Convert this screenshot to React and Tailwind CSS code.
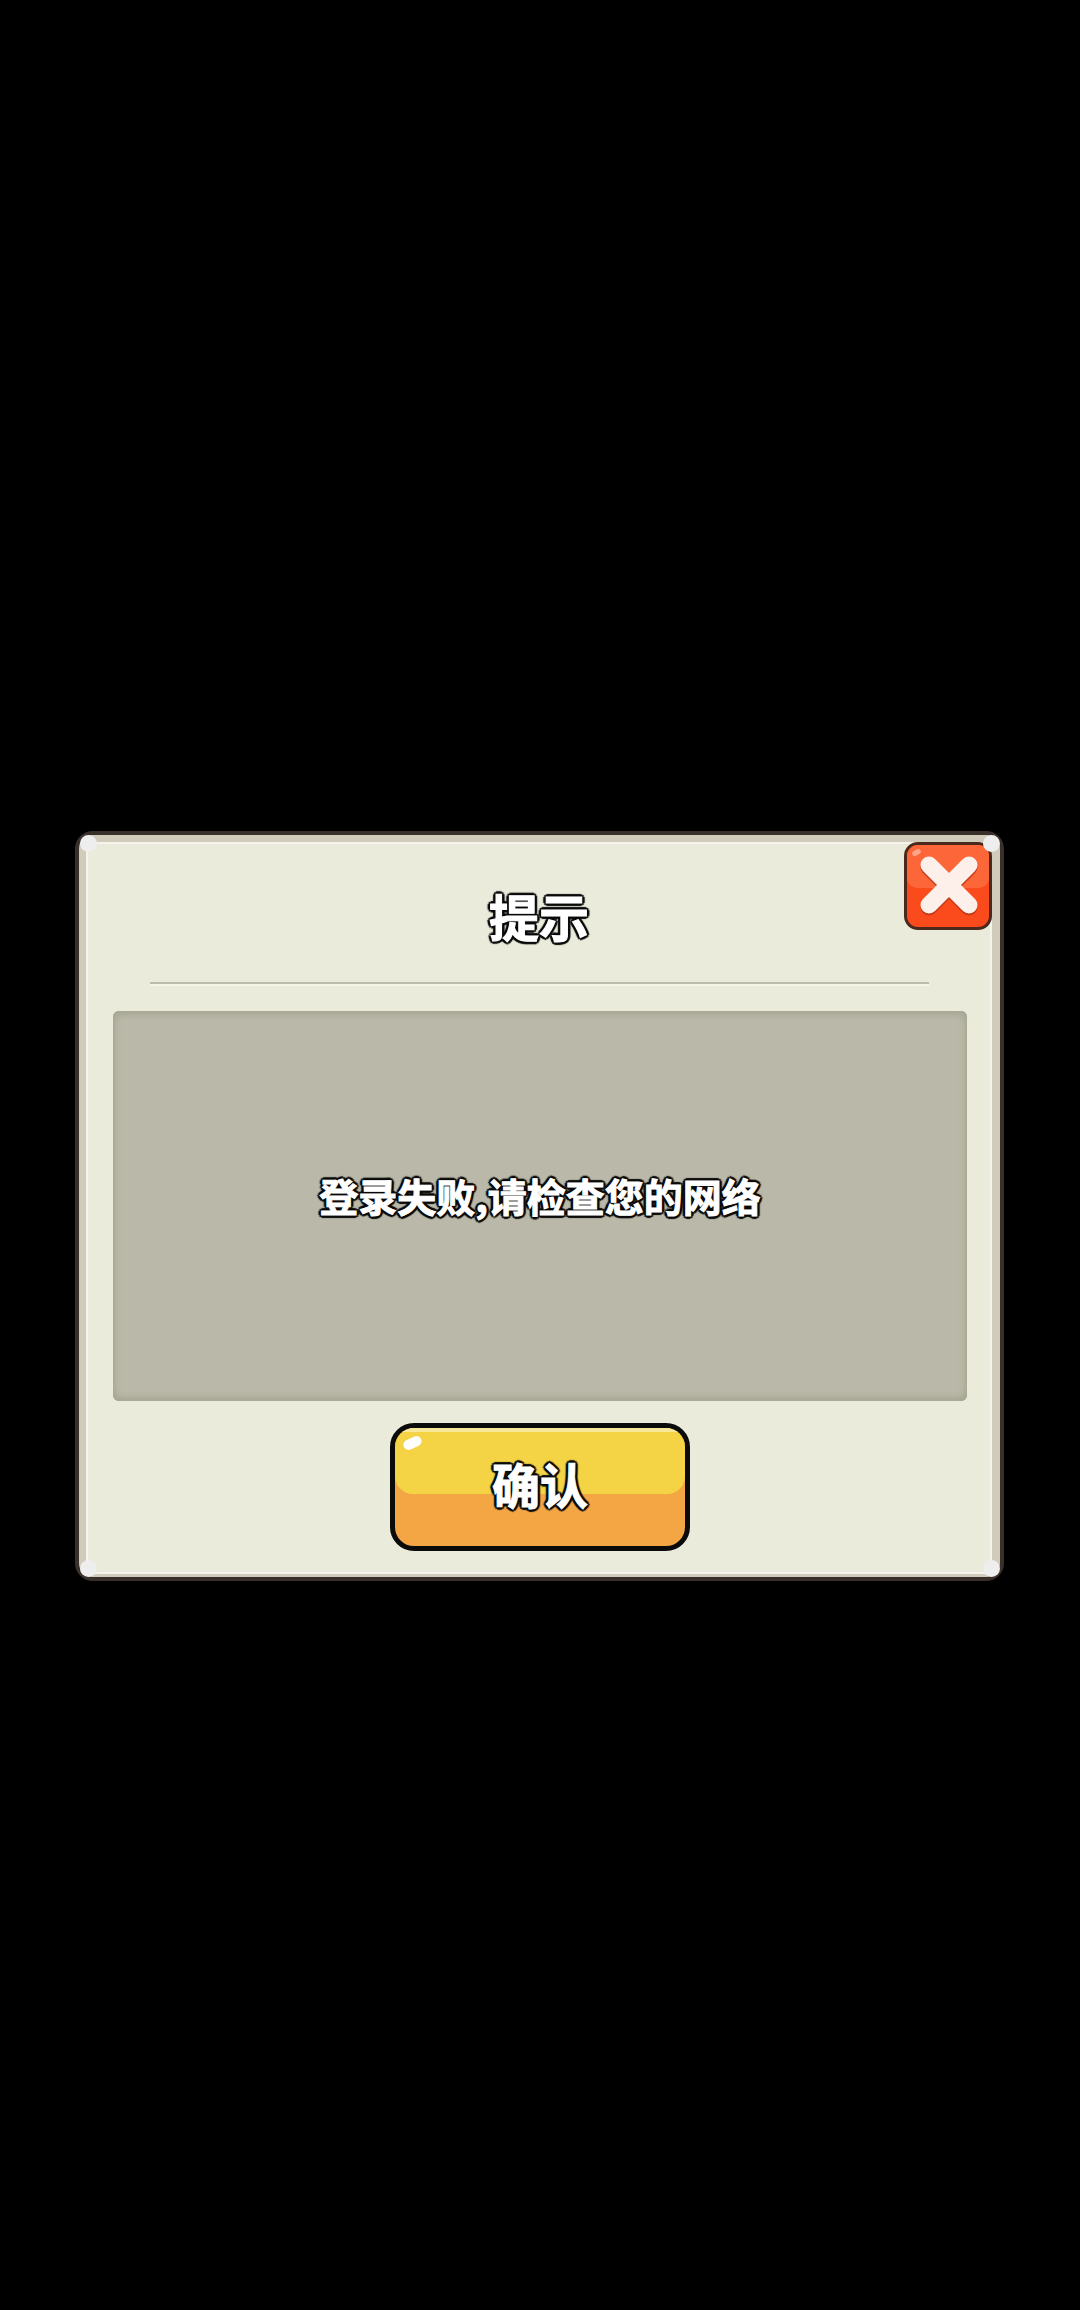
import React from "react";

const cjk = "font-['Noto_Sans_CJK_SC','Noto_Sans',sans-serif] font-bold text-white [-webkit-text-stroke:1px_#fff] [text-shadow:3px_0_1px_#0a0a0a,-3px_0_1px_#0a0a0a,0_3px_1px_#0a0a0a,0_-3px_1px_#0a0a0a,2px_2px_1px_#0a0a0a,-2px_2px_1px_#0a0a0a,2px_-2px_1px_#0a0a0a,-2px_-2px_1px_#0a0a0a]";

const Corner = ({ className }) => (
  <div className={"absolute w-[17px] h-[17px] rounded-full bg-[#efeeee] " + className}></div>
);

const CloseButton = () => (
  <button className="absolute left-[816px] top-[-2px] w-[88px] h-[88px] rounded-[14px] border-[3px] border-[#4b2a1d] bg-[#fb4a1c] overflow-hidden">
    <div className="absolute left-0 right-0 top-0 h-[43px] bg-[#fc6639] rounded-b-[10px]"></div>
    <div className="absolute left-[5px] top-[5px] w-[9px] h-[5px] rounded-full bg-[#fda58a] -rotate-[30deg]"></div>
    <svg className="absolute left-0 top-0" width="82" height="82" viewBox="0 0 82 82">
      <path d="M22 20 L62 60 M62 20 L22 60" stroke="#c43a18" strokeWidth="17" strokeLinecap="round" transform="translate(0 2)" />
      <path d="M22 20 L62 60 M62 20 L22 60" stroke="#fdf0ea" strokeWidth="17" strokeLinecap="round" />
    </svg>
  </button>
);

const ConfirmButton = () => (
  <button className="relative ml-[2px] w-[300px] h-[128px] rounded-[24px] border-[5px] border-[#0b0b0b] bg-[#f4a645] overflow-hidden flex items-center justify-center">
    <div className="absolute left-0 right-0 top-0 h-[66px] bg-[#f4d444] border-t-[4px] border-[#f8e89a] rounded-b-[18px]"></div>
    <div className="absolute left-[8px] top-[10px] w-[19px] h-[10px] rounded-full bg-white -rotate-[25deg]"></div>
    <span className={cjk + " relative text-[48px] leading-none -mt-[8px]"}>确认</span>
  </button>
);

export default function App() {
  return (
    <div className="w-[1080px] h-[2310px] bg-black pt-[831px] pl-[75px]">
      <div className="relative w-[929px] h-[750px] rounded-[18px] border-[4px] border-[#3a302b] bg-[#d1cbbc]">
        <div className="relative mt-[7px] ml-[7px] mr-[8px] h-[732px] w-[906px] border-[2px] border-[#f4f3ec] bg-[#ebebdb] flex flex-col">
          <div className="h-[138px] flex items-center justify-center shrink-0">
            <span className={cjk + " text-[50px] leading-none mt-[4px]"}>提示</span>
          </div>
          <div className="ml-[62px] w-[779px] shrink-0">
            <div className="h-[2px] bg-[#bcbcaa]"></div>
            <div className="h-[2px] bg-[#f5f5e6]"></div>
          </div>
          <div className="ml-[25px] mt-[25px] w-[854px] h-[390px] shrink-0 rounded-[6px] bg-[#bab9a9] shadow-[inset_0_6px_6px_-2px_#a8a794,inset_0_-6px_6px_-2px_#a8a794,inset_6px_0_6px_-3px_#adac9a,inset_-6px_0_6px_-3px_#adac9a] flex items-center justify-center">
            <span className={cjk + " text-[39px] leading-none -mt-[22px]"}>登录失败,请检查您的网络</span>
          </div>
          <div className="mt-[22px] flex justify-center">
            <ConfirmButton />
          </div>
          <CloseButton />
        </div>
        <Corner className="left-[1px] top-0" />
        <Corner className="right-0 top-0" />
        <Corner className="left-[1px] bottom-0" />
        <Corner className="right-0 bottom-0" />
      </div>
    </div>
  );
}
